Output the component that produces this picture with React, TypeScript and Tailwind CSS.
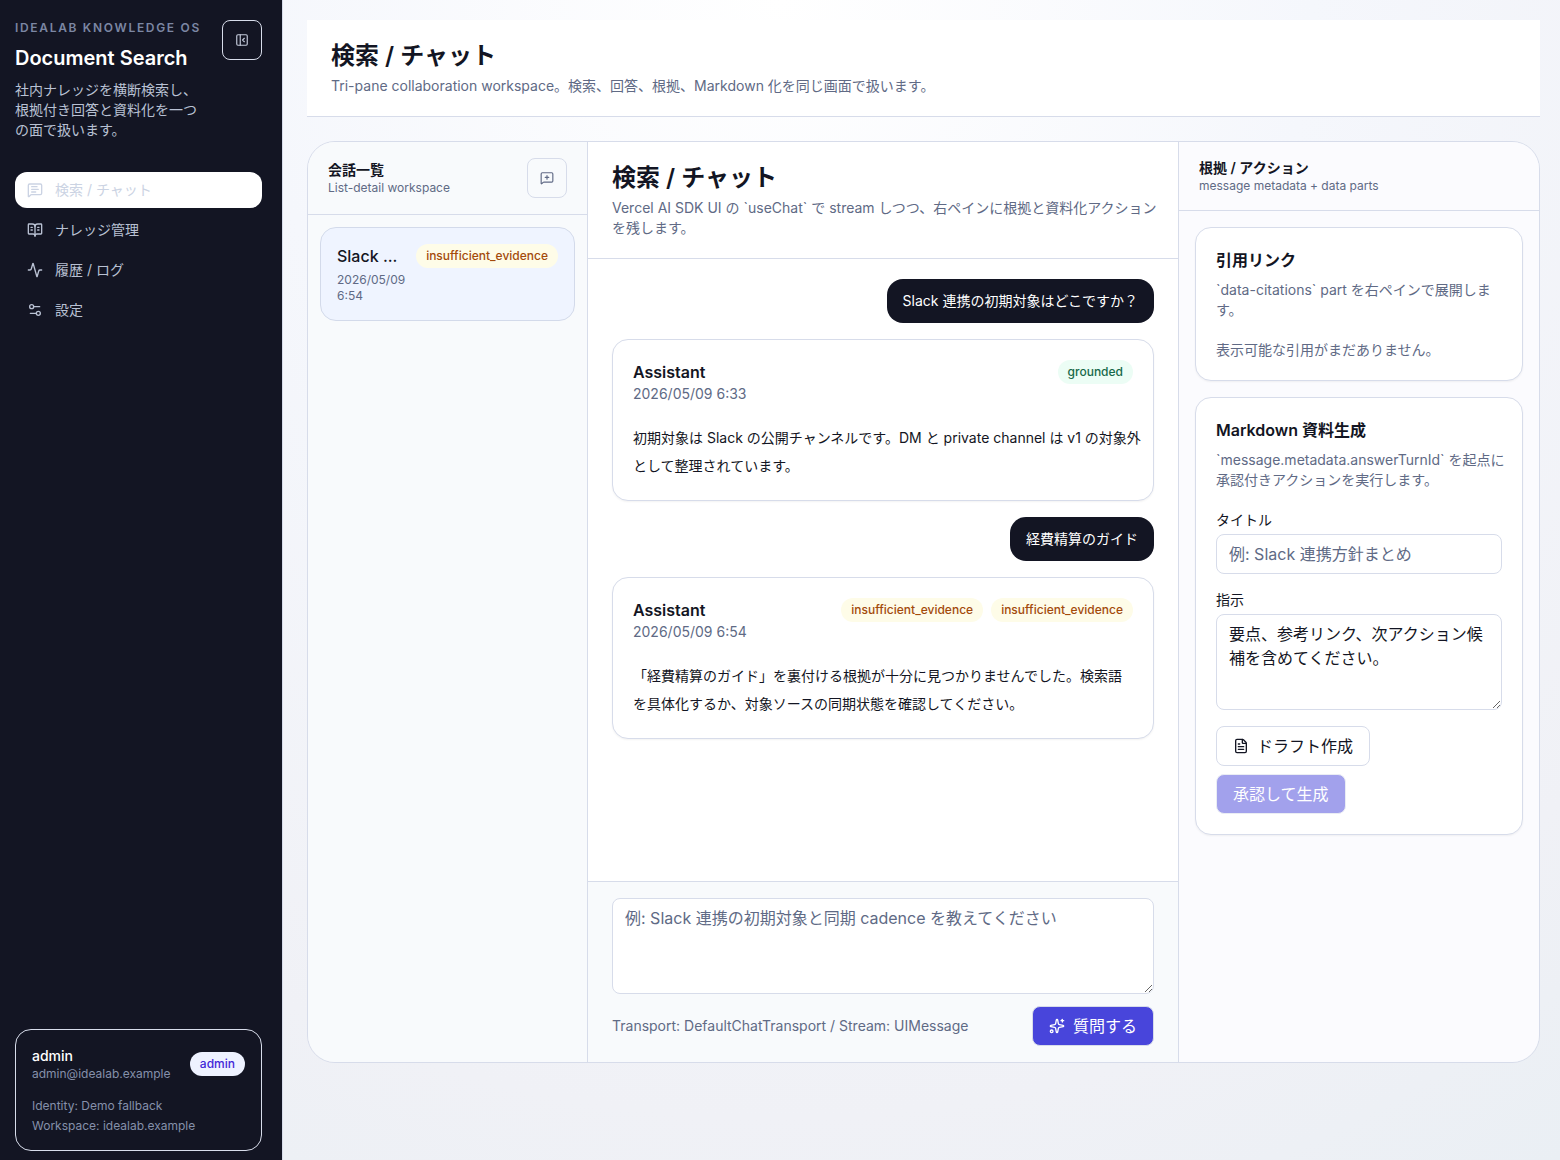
import React from "react";
import {
  Activity,
  BookOpenText,
  FileText,
  MessageSquarePlus,
  MessageSquareText,
  PanelLeftClose,
  Settings2,
  Sparkles,
} from "lucide-react";

const navItems = [
  { label: "検索 / チャット", icon: MessageSquareText, active: true },
  { label: "ナレッジ管理", icon: BookOpenText, active: false },
  { label: "履歴 / ログ", icon: Activity, active: false },
  { label: "設定", icon: Settings2, active: false },
];

const messages = [
  {
    question: "Slack 連携の初期対象はどこですか？",
    date: "2026/05/09 6:33",
    badges: ["grounded"],
    answer: [
      "初期対象は Slack の公開チャンネルです。DM と private channel は v1 の対象外",
      "として整理されています。",
    ],
  },
  {
    question: "経費精算のガイド",
    date: "2026/05/09 6:54",
    badges: ["insufficient_evidence", "insufficient_evidence"],
    answer: [
      "「経費精算のガイド」を裏付ける根拠が十分に見つかりませんでした。検索語",
      "を具体化するか、対象ソースの同期状態を確認してください。",
    ],
  },
];

function Badge({ label }: { label: string }) {
  const tone =
    label === "grounded"
      ? "bg-[#ecfdf5] text-[#17694a]"
      : label === "admin"
        ? "bg-[#eef2ff] text-[#4227d8]"
        : "bg-[#fefce8] text-[#a34a0b]";
  return (
    <span
      className={`inline-flex h-6 shrink-0 items-center rounded-full px-2.5 text-xs font-medium ${tone}`}
    >
      {label}
    </span>
  );
}

// Keeps each phrase on its own line
function Lines({ lines }: { lines: string[] }) {
  return (
    <>
      {lines.map((line) => (
        <span key={line} className="block whitespace-nowrap">
          {line}
        </span>
      ))}
    </>
  );
}

function Sidebar() {
  return (
    <aside className="flex w-[283px] shrink-0 flex-col justify-between border-r border-[#d7dcea] bg-[#131523] pt-5 pr-5 pb-[9px] pl-[15px]">
      <div>
        <div className="flex items-start justify-between">
          <div className="min-w-0">
            <p className="text-xs font-semibold tracking-[0.14em] whitespace-nowrap text-[#7c87a3] uppercase">
              Idealab Knowledge OS
            </p>
            <h1 className="mt-2 text-xl font-semibold text-white">Document Search</h1>
            <p className="mt-2 max-w-[190px] text-sm text-[#b9c1d3]">
              社内ナレッジを横断検索し、根拠付き回答と資料化を一つの面で扱います。
            </p>
          </div>
          <button
            type="button"
            aria-label="サイドバーを閉じる"
            className="flex size-10 shrink-0 items-center justify-center rounded-lg border border-[#d7dcea] text-[#c3cada]"
          >
            <PanelLeftClose className="size-3.5" />
          </button>
        </div>

        <nav className="mt-8 flex flex-col gap-1">
          {navItems.map(({ label, icon: Icon, active }) => (
            <a
              key={label}
              href="#"
              className={`flex h-9 items-center gap-3 rounded-xl px-3 text-sm ${
                active ? "bg-white text-[#cbd3e3]" : "text-[#b9c1d3]"
              }`}
            >
              <Icon className="size-4" />
              {label}
            </a>
          ))}
        </nav>
      </div>

      <div className="rounded-2xl border border-[#d7dcea] p-4">
        <div className="flex items-center justify-between">
          <div>
            <p className="text-sm font-medium text-white">admin</p>
            <p className="text-xs text-[#8590aa]">admin@idealab.example</p>
          </div>
          <Badge label="admin" />
        </div>
        <div className="mt-4 flex flex-col gap-1 text-xs text-[#8590aa]">
          <p>Identity: Demo fallback</p>
          <p>Workspace: idealab.example</p>
        </div>
      </div>
    </aside>
  );
}

function ConversationList() {
  return (
    <section className="border-r border-[#d7dcea] bg-[#f8fafc]">
      <div className="flex items-center justify-between border-b border-[#d7dcea] px-5 py-4">
        <div>
          <h2 className="text-sm font-semibold">会話一覧</h2>
          <p className="text-xs text-[#606a85]">List-detail workspace</p>
        </div>
        <button
          type="button"
          aria-label="新しい会話"
          className="flex size-10 items-center justify-center rounded-lg border border-[#d7dcea] text-[#606a85]"
        >
          <MessageSquarePlus className="size-3.5" />
        </button>
      </div>
      <div className="p-3">
        <a
          href="#"
          className="flex items-start justify-between gap-2 rounded-2xl border border-[#d3daea] bg-[#eff4ff] p-4"
        >
          <div className="min-w-0">
            <p className="font-medium">Slack ...</p>
            <p className="mt-1 text-xs text-[#606a85]">2026/05/09 6:54</p>
          </div>
          <Badge label="insufficient_evidence" />
        </a>
      </div>
    </section>
  );
}

function ChatPane() {
  return (
    <section className="flex min-w-0 flex-col border-r border-[#d7dcea] bg-white">
      <div className="border-b border-[#d7dcea] px-6 py-5">
        <h2 className="text-2xl font-semibold">検索 / チャット</h2>
        <p className="mt-1 text-sm text-[#606a85]">
          <Lines
            lines={[
              "Vercel AI SDK UI の `useChat` で stream しつつ、右ペインに根拠と資料化アクション",
              "を残します。",
            ]}
          />
        </p>
      </div>

      <div className="flex flex-1 flex-col gap-4 px-6 py-5">
        {messages.map((message) => (
          <React.Fragment key={message.question}>
            <p className="self-end rounded-2xl bg-[#131523] px-4 py-3 text-sm text-white">
              {message.question}
            </p>
            <article className="rounded-2xl border border-[#d7dcea] bg-white p-5 shadow-xs">
              <div className="flex items-start justify-between gap-2">
                <div>
                  <h3 className="font-semibold">Assistant</h3>
                  <p className="text-sm text-[#606a85]">{message.date}</p>
                </div>
                <div className="flex gap-2">
                  {message.badges.map((badge, i) => (
                    <Badge key={i} label={badge} />
                  ))}
                </div>
              </div>
              <p className="mt-5 text-sm leading-7">
                <Lines lines={message.answer} />
              </p>
            </article>
          </React.Fragment>
        ))}
      </div>

      <form className="border-t border-[#d7dcea] bg-[#f8fafc] px-6 py-4">
        <textarea
          aria-label="質問"
          placeholder="例: Slack 連携の初期対象と同期 cadence を教えてください"
          className="block h-24 w-full rounded-lg border border-[#d7dcea] bg-white px-3 py-[7px] placeholder:text-[#606a85]"
        />
        <div className="mt-3 flex items-center justify-between">
          <p className="text-sm text-[#606a85]">
            Transport: DefaultChatTransport / Stream: UIMessage
          </p>
          <button
            type="button"
            className="flex h-10 items-center gap-2 rounded-lg border border-[#d7dcea] bg-[#4845db] px-4 text-white"
          >
            <Sparkles className="size-4" />
            質問する
          </button>
        </div>
      </form>
    </section>
  );
}

function ActionPane() {
  return (
    <section className="bg-[#fbfbfe]">
      <div className="border-b border-[#d7dcea] px-5 py-4">
        <h2 className="text-sm font-semibold">根拠 / アクション</h2>
        <p className="text-xs text-[#606a85]">message metadata + data parts</p>
      </div>
      <div className="flex flex-col gap-4 p-4">
        <div className="rounded-2xl border border-[#d7dcea] bg-white p-5 shadow-xs">
          <h3 className="font-semibold">引用リンク</h3>
          <p className="mt-2 text-sm text-[#606a85]">
            `data-citations` part を右ペインで展開します。
          </p>
          <p className="mt-5 text-sm text-[#606a85]">表示可能な引用がまだありません。</p>
        </div>

        <form className="rounded-2xl border border-[#d7dcea] bg-white p-5 shadow-xs">
          <h3 className="font-semibold">Markdown 資料生成</h3>
          <p className="mt-2 text-sm text-[#606a85]">
            <Lines
              lines={[
                "`message.metadata.answerTurnId` を起点に",
                "承認付きアクションを実行します。",
              ]}
            />
          </p>
          <label htmlFor="doc-title" className="mt-5 block text-sm">
            タイトル
          </label>
          <input
            id="doc-title"
            type="text"
            placeholder="例: Slack 連携方針まとめ"
            className="mt-1 block h-10 w-full rounded-lg border border-[#d7dcea] bg-white px-3 placeholder:text-[#606a85]"
          />
          <label htmlFor="doc-instruction" className="mt-4 block text-sm">
            指示
          </label>
          <textarea
            id="doc-instruction"
            defaultValue="要点、参考リンク、次アクション候補を含めてください。"
            className="mt-1 block h-24 w-full rounded-lg border border-[#d7dcea] bg-white px-3 py-[7px]"
          />
          <div className="mt-4 flex flex-wrap gap-2">
            <button
              type="button"
              className="flex h-10 items-center gap-2 rounded-lg border border-[#d7dcea] bg-white px-4"
            >
              <FileText className="size-4" />
              ドラフト作成
            </button>
            <button
              type="button"
              disabled
              className="h-10 rounded-lg border border-[#d7dcea] bg-[#4845db] px-4 text-white opacity-50"
            >
              承認して生成
            </button>
          </div>
        </form>
      </div>
    </section>
  );
}

export default function App() {
  return (
    <div className="flex min-h-screen bg-[radial-gradient(circle_at_top,#ffffff_0%,#f5f7fc_38%,#f0f1f6_80%,#eaeff4_100%)] font-['Inter','Noto_Sans_CJK_JP',sans-serif] text-[#131523]">
      <Sidebar />
      <main className="min-w-0 flex-1 py-5 pr-5 pl-6">
        <header className="border-b border-[#d7dcea] bg-white px-6 py-5">
          <h2 className="text-2xl font-semibold">検索 / チャット</h2>
          <p className="mt-1 text-sm text-[#606a85]">
            Tri-pane collaboration workspace。検索、回答、根拠、Markdown 化を同じ画面で扱います。
          </p>
        </header>
        <div className="mt-6 grid min-h-[calc(100vh-238px)] grid-cols-[280px_minmax(0,1fr)_360px] overflow-hidden rounded-[28px] border border-[#d7dcea]">
          <ConversationList />
          <ChatPane />
          <ActionPane />
        </div>
      </main>
    </div>
  );
}
